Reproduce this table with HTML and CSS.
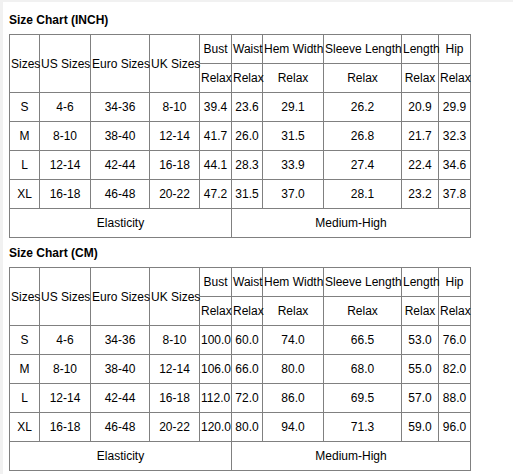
FILE: index.html
```html
<!DOCTYPE html>
<html>
<head>
    <title>Size Chart</title>
    <link rel="stylesheet" href="styles.css">
</head>
<body>
    <div class="panel">
        <div class="chart-title">Size Chart (INCH)</div>
        <table class="size-table">
            <colgroup>
                <col class="c-size"><col class="c-us"><col class="c-euro"><col class="c-uk"><col class="c-bust">
                <col class="c-waist"><col class="c-hem"><col class="c-sleeve"><col class="c-length"><col class="c-hip">
            </colgroup>
            <tr>
                <td rowspan="2">Sizes</td>
                <td rowspan="2">US Sizes</td>
                <td rowspan="2">Euro Sizes</td>
                <td rowspan="2">UK Sizes</td>
                <td>Bust</td>
                <td>Waist</td>
                <td>Hem Width</td>
                <td>Sleeve Length</td>
                <td>Length</td>
                <td>Hip</td>
            </tr>
            <tr>
                <td>Relax</td><td>Relax</td><td>Relax</td><td>Relax</td><td>Relax</td><td>Relax</td>
            </tr>
            <tr>
                <td>S</td><td>4-6</td><td>34-36</td><td>8-10</td><td>39.4</td><td>23.6</td><td>29.1</td><td>26.2</td><td>20.9</td><td>29.9</td>
            </tr>
            <tr>
                <td>M</td><td>8-10</td><td>38-40</td><td>12-14</td><td>41.7</td><td>26.0</td><td>31.5</td><td>26.8</td><td>21.7</td><td>32.3</td>
            </tr>
            <tr>
                <td>L</td><td>12-14</td><td>42-44</td><td>16-18</td><td>44.1</td><td>28.3</td><td>33.9</td><td>27.4</td><td>22.4</td><td>34.6</td>
            </tr>
            <tr>
                <td>XL</td><td>16-18</td><td>46-48</td><td>20-22</td><td>47.2</td><td>31.5</td><td>37.0</td><td>28.1</td><td>23.2</td><td>37.8</td>
            </tr>
            <tr>
                <td colspan="5">Elasticity</td>
                <td colspan="5">Medium-High</td>
            </tr>
        </table>

        <div class="chart-title">Size Chart (CM)</div>
        <table class="size-table">
            <colgroup>
                <col class="c-size"><col class="c-us"><col class="c-euro"><col class="c-uk"><col class="c-bust">
                <col class="c-waist"><col class="c-hem"><col class="c-sleeve"><col class="c-length"><col class="c-hip">
            </colgroup>
            <tr>
                <td rowspan="2">Sizes</td>
                <td rowspan="2">US Sizes</td>
                <td rowspan="2">Euro Sizes</td>
                <td rowspan="2">UK Sizes</td>
                <td>Bust</td>
                <td>Waist</td>
                <td>Hem Width</td>
                <td>Sleeve Length</td>
                <td>Length</td>
                <td>Hip</td>
            </tr>
            <tr>
                <td>Relax</td><td>Relax</td><td>Relax</td><td>Relax</td><td>Relax</td><td>Relax</td>
            </tr>
            <tr>
                <td>S</td><td>4-6</td><td>34-36</td><td>8-10</td><td>100.0</td><td>60.0</td><td>74.0</td><td>66.5</td><td>53.0</td><td>76.0</td>
            </tr>
            <tr>
                <td>M</td><td>8-10</td><td>38-40</td><td>12-14</td><td>106.0</td><td>66.0</td><td>80.0</td><td>68.0</td><td>55.0</td><td>82.0</td>
            </tr>
            <tr>
                <td>L</td><td>12-14</td><td>42-44</td><td>16-18</td><td>112.0</td><td>72.0</td><td>86.0</td><td>69.5</td><td>57.0</td><td>88.0</td>
            </tr>
            <tr>
                <td>XL</td><td>16-18</td><td>46-48</td><td>20-22</td><td>120.0</td><td>80.0</td><td>94.0</td><td>71.3</td><td>59.0</td><td>96.0</td>
            </tr>
            <tr>
                <td colspan="5">Elasticity</td>
                <td colspan="5">Medium-High</td>
            </tr>
        </table>
    </div>
</body>
</html>
```

FILE: styles.css
```css
body {
    margin: 0;
    background: #f1f1f1;
    font-family: "Liberation Sans", Arial, sans-serif;
    color: #000;
}

.panel {
    margin: 2px 0 0 3px;
    padding: 11px 6px 4px;
    background: #fff;
    min-height: 460px;
}

.chart-title {
    font-size: 12px;
    font-weight: bold;
    line-height: 14px;
    margin-bottom: 7px;
}

/* Size tables */
.size-table {
    border-collapse: collapse;
    table-layout: fixed;
    width: 462px;
    margin-bottom: 8px;
    font-size: 12px;
}

.size-table td {
    border: 1px solid #808080;
    padding: 0 1px;
    height: 28px;
    text-align: center;
    vertical-align: middle;
    white-space: nowrap;
    line-height: 14px;
}

.c-size { width: 30px; }
.c-us { width: 51px; }
.c-euro { width: 59px; }
.c-uk { width: 50px; }
.c-bust { width: 32px; }
.c-waist { width: 31px; }
.c-hem { width: 61px; }
.c-sleeve { width: 78px; }
.c-length { width: 37px; }
.c-hip { width: 32px; }
```
